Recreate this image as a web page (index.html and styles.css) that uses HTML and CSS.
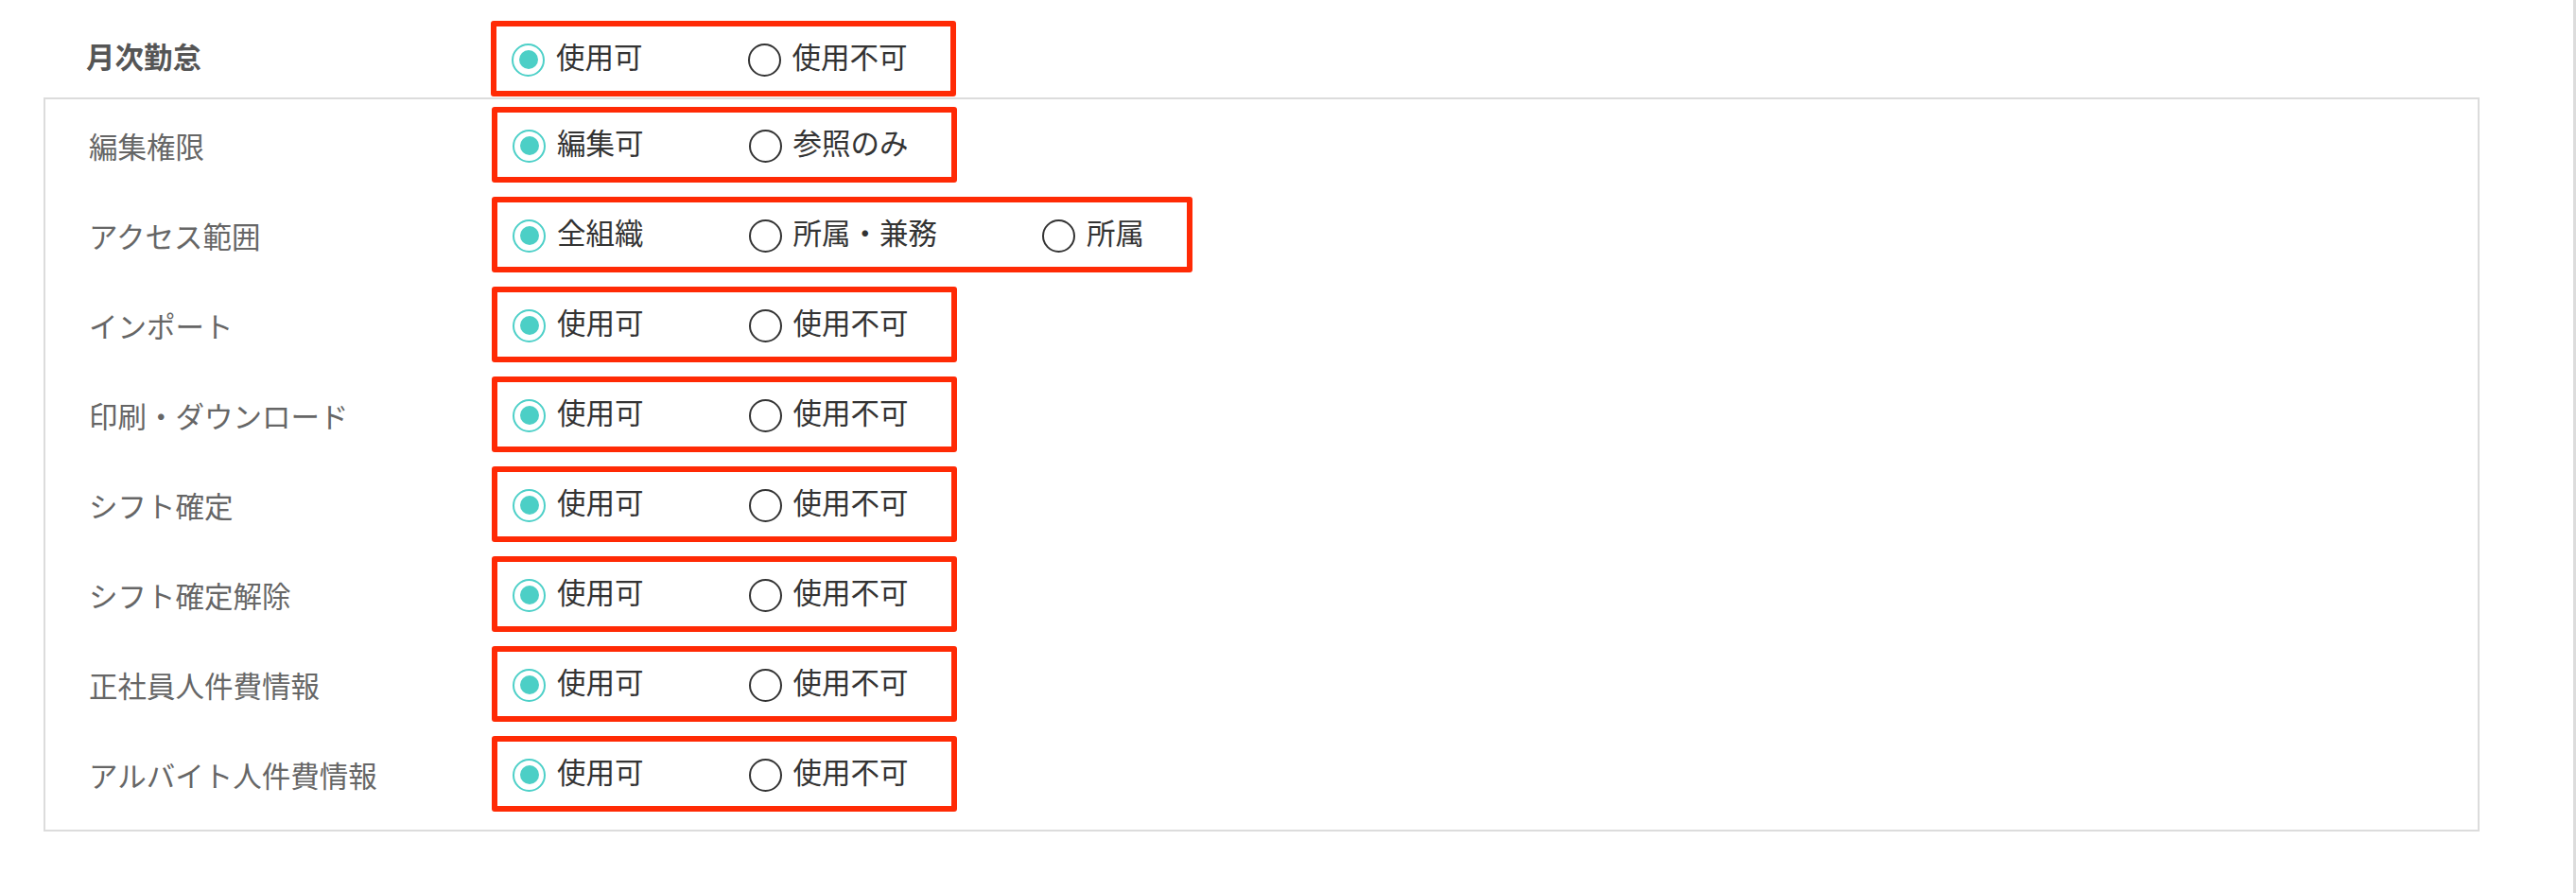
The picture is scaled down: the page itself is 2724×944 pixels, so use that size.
FILE: index.html
```html
<!DOCTYPE html>
<html lang="ja">
<head>
<meta charset="utf-8">
<title>権限設定</title>
<link rel="stylesheet" href="styles.css">
</head>
<body>
<div class="page">
  <div class="row row-head">
    <div class="label label-head">月次勤怠</div>
    <div class="choices">
      <label class="opt"><input type="radio" name="r0" checked><span>使用可</span></label>
      <label class="opt"><input type="radio" name="r0"><span>使用不可</span></label>
    </div>
  </div>
  <div class="panel">
    <div class="row">
      <div class="label">編集権限</div>
      <div class="choices">
        <label class="opt"><input type="radio" name="r1" checked><span>編集可</span></label>
        <label class="opt"><input type="radio" name="r1"><span>参照のみ</span></label>
      </div>
    </div>
    <div class="row">
      <div class="label">アクセス範囲</div>
      <div class="choices">
        <label class="opt"><input type="radio" name="r2" checked><span>全組織</span></label>
        <label class="opt"><input type="radio" name="r2"><span>所属・兼務</span></label>
        <label class="opt"><input type="radio" name="r2"><span>所属</span></label>
      </div>
    </div>
    <div class="row">
      <div class="label">インポート</div>
      <div class="choices">
        <label class="opt"><input type="radio" name="r3" checked><span>使用可</span></label>
        <label class="opt"><input type="radio" name="r3"><span>使用不可</span></label>
      </div>
    </div>
    <div class="row">
      <div class="label">印刷・ダウンロード</div>
      <div class="choices">
        <label class="opt"><input type="radio" name="r4" checked><span>使用可</span></label>
        <label class="opt"><input type="radio" name="r4"><span>使用不可</span></label>
      </div>
    </div>
    <div class="row">
      <div class="label">シフト確定</div>
      <div class="choices">
        <label class="opt"><input type="radio" name="r5" checked><span>使用可</span></label>
        <label class="opt"><input type="radio" name="r5"><span>使用不可</span></label>
      </div>
    </div>
    <div class="row">
      <div class="label">シフト確定解除</div>
      <div class="choices">
        <label class="opt"><input type="radio" name="r6" checked><span>使用可</span></label>
        <label class="opt"><input type="radio" name="r6"><span>使用不可</span></label>
      </div>
    </div>
    <div class="row">
      <div class="label">正社員人件費情報</div>
      <div class="choices">
        <label class="opt"><input type="radio" name="r7" checked><span>使用可</span></label>
        <label class="opt"><input type="radio" name="r7"><span>使用不可</span></label>
      </div>
    </div>
    <div class="row">
      <div class="label">アルバイト人件費情報</div>
      <div class="choices">
        <label class="opt"><input type="radio" name="r8" checked><span>使用可</span></label>
        <label class="opt"><input type="radio" name="r8"><span>使用不可</span></label>
      </div>
    </div>
  </div>
</div>
</body>
</html>
```
FILE: styles.css
```css
html, body {
  margin: 0;
  padding: 0;
  background: #fff;
}
body {
  font-family: "Noto Sans CJK JP", "Noto Sans", sans-serif;
  font-size: 30.5px;
}
.page {
  box-sizing: border-box;
  min-height: 100vh;
  padding: 22px 0 0 46px;
  border-right: 3px solid #dcdcdc;
}
.row {
  display: flex;
  align-items: center;
  height: 80px;
}
.row-head {
  padding-left: 45px;
}
.label {
  width: 426px;
  flex: none;
  color: #666;
  line-height: 1;
  padding-top: 3px;
}
.label-head {
  width: 428px;
  font-weight: bold;
  color: #555;
  padding-top: 0;
  padding-bottom: 5px;
}
.panel {
  box-sizing: border-box;
  width: 2576px;
  margin-top: 1px;
  border: 2px solid #dcdcdc;
  padding: 8px 0 19px 46px;
  display: flex;
  flex-direction: column;
  gap: 15px;
}
.choices {
  box-sizing: border-box;
  height: 80px;
  display: flex;
  align-items: center;
  gap: 111px;
  padding: 0 45px 0 16px;
  border: 6px solid #ff2a05;
  border-radius: 3px;
}
.opt {
  display: flex;
  align-items: center;
  gap: 12px;
  color: #333;
  line-height: 1;
}
.opt span {
  padding-bottom: 5px;
}
.opt input {
  appearance: none;
  -webkit-appearance: none;
  margin: 2px 0 0 0;
  box-sizing: border-box;
  width: 35px;
  height: 35px;
  border-radius: 50%;
  border: 2px solid #333;
  background: #fff;
  display: grid;
  place-items: center;
}
.opt input:checked {
  border: 2.5px solid #4dd0c8;
}
.opt input:checked::before {
  content: "";
  width: 20px;
  height: 20px;
  border-radius: 50%;
  background: #4ccfc6;
}
```
